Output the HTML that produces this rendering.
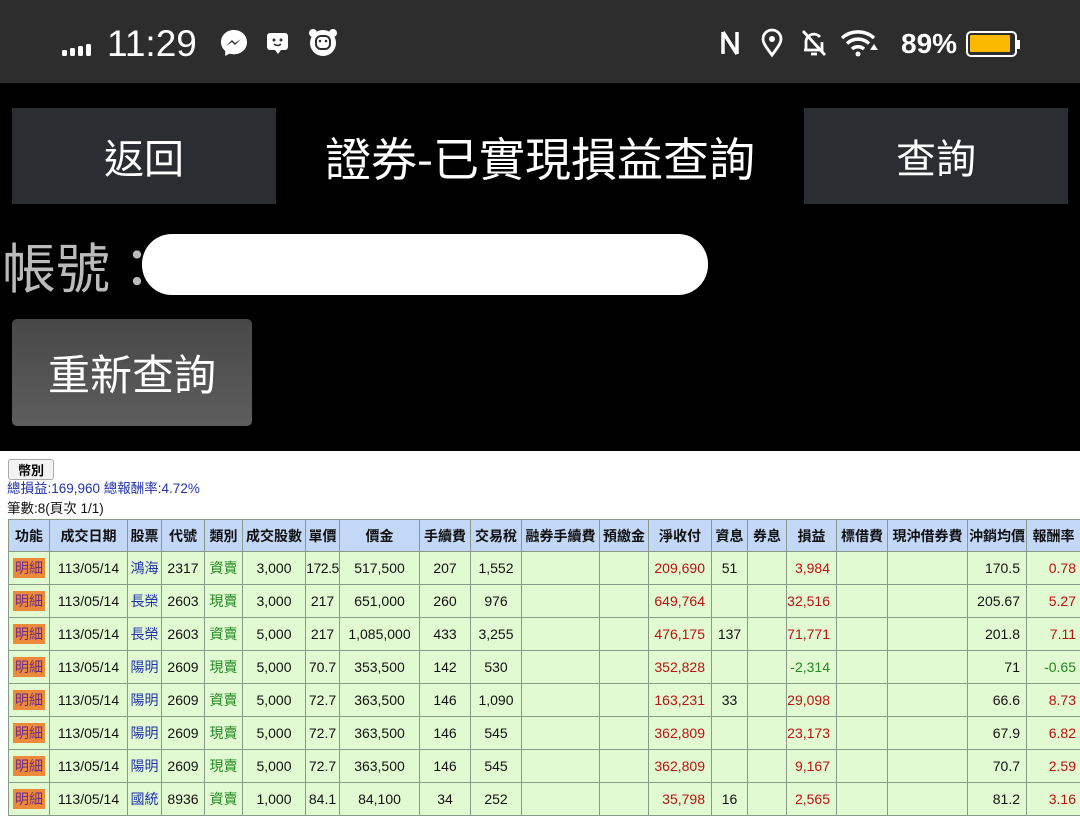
<!DOCTYPE html>
<html><head><meta charset="utf-8"><style>
*{margin:0;padding:0;box-sizing:border-box}
body{width:1080px;height:816px;overflow:hidden;background:#000;font-family:"Liberation Sans","Noto Sans CJK TC",sans-serif;position:relative}
.sb{position:absolute;left:0;top:0;width:1080px;height:83px;background:#2d2d2d;color:#fff}
.abs{position:absolute}
.btn{position:absolute;background:#2a2e33;color:#fff;font-size:40px;display:flex;align-items:center;justify-content:center;font-family:"Noto Sans CJK TC",sans-serif}
.white{position:absolute;left:0;top:451px;width:1080px;height:365px;background:#fff}
table{position:absolute;left:8px;top:519px;width:1080px;border-collapse:collapse;table-layout:fixed;font-size:14px;font-family:"Liberation Sans","Noto Sans CJK TC",sans-serif}
td,th{border:1px solid #8a9a8a;text-align:center;white-space:nowrap;overflow:hidden;padding:0}
th{background:#c3d7f7;height:32px;font-weight:bold;color:#111;font-family:"Noto Sans CJK TC",sans-serif;font-size:14px}
td{background:#e2fad2;height:33px;color:#111}
.b{color:#2233aa}.g{color:#228822}.r{color:#bb1111;text-align:right;padding-right:6px}.gr{color:#228822;text-align:right;padding-right:6px}.rt{text-align:right;padding-right:6px}
td:last-child{padding-right:12px}
th:last-child{padding-right:8px}
.m{display:inline-block;background:#ec8a3a;color:#6a2a8a;padding:1px 2px;font-size:14px;line-height:18px}
</style></head><body>
<div class="sb">
<svg class="abs" style="left:62px;top:42px" width="36" height="14"><rect x="0" y="8" width="5" height="6" rx="1.5" fill="#fff"/><rect x="8" y="6" width="5" height="8" rx="1.5" fill="#fff"/><rect x="16" y="4" width="5" height="10" rx="1.5" fill="#fff"/><rect x="24" y="2" width="5" height="12" rx="1.5" fill="#fff"/></svg>
<div class="abs" style="left:107px;top:23px;font-size:37px;">11:29</div>
<svg class="abs" style="left:219px;top:28px" width="30" height="30" viewBox="0 0 30 30"><path d="M15 2C7.5 2 2 7.3 2 14c0 3.6 1.6 6.7 4.2 8.9V28l4.3-2.4c1.4.4 2.9.6 4.5.6 7.5 0 13-5.3 13-12S22.5 2 15 2z" fill="#fff"/><path d="M7 18l6-6 3 3 6-4-6 6-3-3z" fill="#2d2d2d"/></svg>
<svg class="abs" style="left:266px;top:32px" width="24" height="24"><rect x="1" y="1" width="21" height="17" rx="3" fill="#fff"/><path d="M9 18l3 4 3-4z" fill="#fff"/><circle cx="8" cy="8" r="1.5" fill="#2d2d2d"/><circle cx="15" cy="8" r="1.5" fill="#2d2d2d"/><path d="M8 12q3.5 3 7 0" stroke="#2d2d2d" stroke-width="1.5" fill="none"/></svg>
<svg class="abs" style="left:306px;top:27px" width="34" height="30"><circle cx="17" cy="16" r="13" fill="#fff"/><circle cx="7" cy="6" r="4" fill="#fff"/><circle cx="27" cy="6" r="4" fill="#fff"/><rect x="10" y="9" width="14" height="13" rx="5" fill="none" stroke="#2d2d2d" stroke-width="2"/><circle cx="14" cy="14" r="1.3" fill="#2d2d2d"/><circle cx="20" cy="14" r="1.3" fill="#2d2d2d"/></svg>
<svg class="abs" style="left:719px;top:28px" width="22" height="30"><path d="M4 4v22M4 4l14 22M18 4v22" stroke="#fff" stroke-width="3.5" fill="none"/></svg>
<svg class="abs" style="left:760px;top:28px" width="24" height="30"><path d="M12 27C6 19 3 15 3 11a9 9 0 0118 0c0 4-3 8-9 16z" fill="none" stroke="#fff" stroke-width="2.8"/><circle cx="12" cy="11" r="3" fill="#fff"/></svg>
<svg class="abs" style="left:800px;top:28px" width="28" height="30"><path d="M6 22V13a8 8 0 0114-4M22 14v8H4" fill="none" stroke="#fff" stroke-width="2.8"/><path d="M11 26h6" stroke="#fff" stroke-width="2.8"/><path d="M3 3l22 24" stroke="#fff" stroke-width="2.8"/></svg>
<svg class="abs" style="left:840px;top:28px" width="40" height="30"><path d="M2 10a24 24 0 0132 0" fill="none" stroke="#fff" stroke-width="3.5"/><path d="M7 15.5a16 16 0 0122 0" fill="none" stroke="#fff" stroke-width="3.5"/><path d="M12 21a9 9 0 0112 0" fill="none" stroke="#fff" stroke-width="3.5"/><circle cx="18" cy="26" r="2.5" fill="#fff"/><path d="M30 22l4-6 4 6z" fill="#fff"/></svg>
<div class="abs" style="left:901px;top:28px;font-size:28px;font-weight:bold;">89%</div>
<div class="abs" style="left:966px;top:31px;width:51px;height:26px;border:2.5px solid #fff;border-radius:5px;padding:2px"><div style="width:40px;height:17px;background:#fbb800;border-radius:1px"></div></div>
<div class="abs" style="left:1017px;top:40px;width:3px;height:9px;background:#fff"></div>
</div>
<div class="btn" style="left:12px;top:108px;width:264px;height:96px">返回</div>
<div class="abs" style="left:276px;top:124px;width:528px;text-align:center;color:#fff;font-size:46px;font-family:'Noto Sans CJK TC',sans-serif;line-height:66px">證券-已實現損益查詢</div>
<div class="btn" style="left:804px;top:108px;width:264px;height:96px">查詢</div>
<div class="abs" style="left:2px;top:230px;color:#bbb;font-size:54px;font-family:'Noto Sans CJK TC',sans-serif;line-height:70px">帳號：</div>
<div class="abs" style="left:142px;top:234px;width:566px;height:61px;background:#fff;border-radius:30px"></div>
<div class="btn" style="left:12px;top:319px;width:240px;height:107px;background:linear-gradient(#484848,#5d5d5d);border-radius:5px;font-size:42px">重新查詢</div>
<div class="white"></div>
<div class="abs" style="left:8px;top:459px;width:46px;height:21px;border:1px solid #aaa;border-radius:3px;background:#f3f3f3;font-size:13px;text-align:center;line-height:19px;font-weight:bold;font-family:'Noto Sans CJK TC',sans-serif">幣別</div>
<div class="abs" style="left:7px;top:480px;font-size:13.5px;color:#2233aa;line-height:18px">總損益:169,960 總報酬率:4.72%</div>
<div class="abs" style="left:7px;top:500px;font-size:13.5px;color:#111;line-height:18px">筆數:8(頁次 1/1)</div>
<table>
<colgroup><col style="width:41px"><col style="width:78px"><col style="width:34px"><col style="width:43px"><col style="width:38px"><col style="width:63px"><col style="width:34px"><col style="width:80px"><col style="width:51px"><col style="width:51px"><col style="width:78px"><col style="width:49px"><col style="width:63px"><col style="width:36px"><col style="width:39px"><col style="width:50px"><col style="width:51px"><col style="width:80px"><col style="width:59px"><col style="width:62px"></colgroup>
<tr><th>功能</th><th>成交日期</th><th>股票</th><th>代號</th><th>類別</th><th>成交股數</th><th>單價</th><th>價金</th><th>手續費</th><th>交易稅</th><th>融券手續費</th><th>預繳金</th><th>淨收付</th><th>資息</th><th>券息</th><th>損益</th><th>標借費</th><th>現沖借券費</th><th>沖銷均價</th><th>報酬率</th></tr>
<tr><td><span class="m">明細</span></td><td>113/05/14</td><td class="b">鴻海</td><td>2317</td><td class="g">資賣</td><td>3,000</td><td style="letter-spacing:-0.5px">172.5</td><td>517,500</td><td>207</td><td>1,552</td><td></td><td></td><td class="r">209,690</td><td>51</td><td></td><td class="r">3,984</td><td></td><td></td><td class="rt">170.5</td><td class="r">0.78</td></tr>
<tr><td><span class="m">明細</span></td><td>113/05/14</td><td class="b">長榮</td><td>2603</td><td class="g">現賣</td><td>3,000</td><td>217</td><td>651,000</td><td>260</td><td>976</td><td></td><td></td><td class="r">649,764</td><td></td><td></td><td class="r">32,516</td><td></td><td></td><td class="rt">205.67</td><td class="r">5.27</td></tr>
<tr><td><span class="m">明細</span></td><td>113/05/14</td><td class="b">長榮</td><td>2603</td><td class="g">資賣</td><td>5,000</td><td>217</td><td>1,085,000</td><td>433</td><td>3,255</td><td></td><td></td><td class="r">476,175</td><td>137</td><td></td><td class="r">71,771</td><td></td><td></td><td class="rt">201.8</td><td class="r">7.11</td></tr>
<tr><td><span class="m">明細</span></td><td>113/05/14</td><td class="b">陽明</td><td>2609</td><td class="g">現賣</td><td>5,000</td><td>70.7</td><td>353,500</td><td>142</td><td>530</td><td></td><td></td><td class="r">352,828</td><td></td><td></td><td class="gr">-2,314</td><td></td><td></td><td class="rt">71</td><td class="gr">-0.65</td></tr>
<tr><td><span class="m">明細</span></td><td>113/05/14</td><td class="b">陽明</td><td>2609</td><td class="g">資賣</td><td>5,000</td><td>72.7</td><td>363,500</td><td>146</td><td>1,090</td><td></td><td></td><td class="r">163,231</td><td>33</td><td></td><td class="r">29,098</td><td></td><td></td><td class="rt">66.6</td><td class="r">8.73</td></tr>
<tr><td><span class="m">明細</span></td><td>113/05/14</td><td class="b">陽明</td><td>2609</td><td class="g">現賣</td><td>5,000</td><td>72.7</td><td>363,500</td><td>146</td><td>545</td><td></td><td></td><td class="r">362,809</td><td></td><td></td><td class="r">23,173</td><td></td><td></td><td class="rt">67.9</td><td class="r">6.82</td></tr>
<tr><td><span class="m">明細</span></td><td>113/05/14</td><td class="b">陽明</td><td>2609</td><td class="g">現賣</td><td>5,000</td><td>72.7</td><td>363,500</td><td>146</td><td>545</td><td></td><td></td><td class="r">362,809</td><td></td><td></td><td class="r">9,167</td><td></td><td></td><td class="rt">70.7</td><td class="r">2.59</td></tr>
<tr><td><span class="m">明細</span></td><td>113/05/14</td><td class="b">國統</td><td>8936</td><td class="g">資賣</td><td>1,000</td><td>84.1</td><td>84,100</td><td>34</td><td>252</td><td></td><td></td><td class="r">35,798</td><td>16</td><td></td><td class="r">2,565</td><td></td><td></td><td class="rt">81.2</td><td class="r">3.16</td></tr>
</table>
</body></html>
